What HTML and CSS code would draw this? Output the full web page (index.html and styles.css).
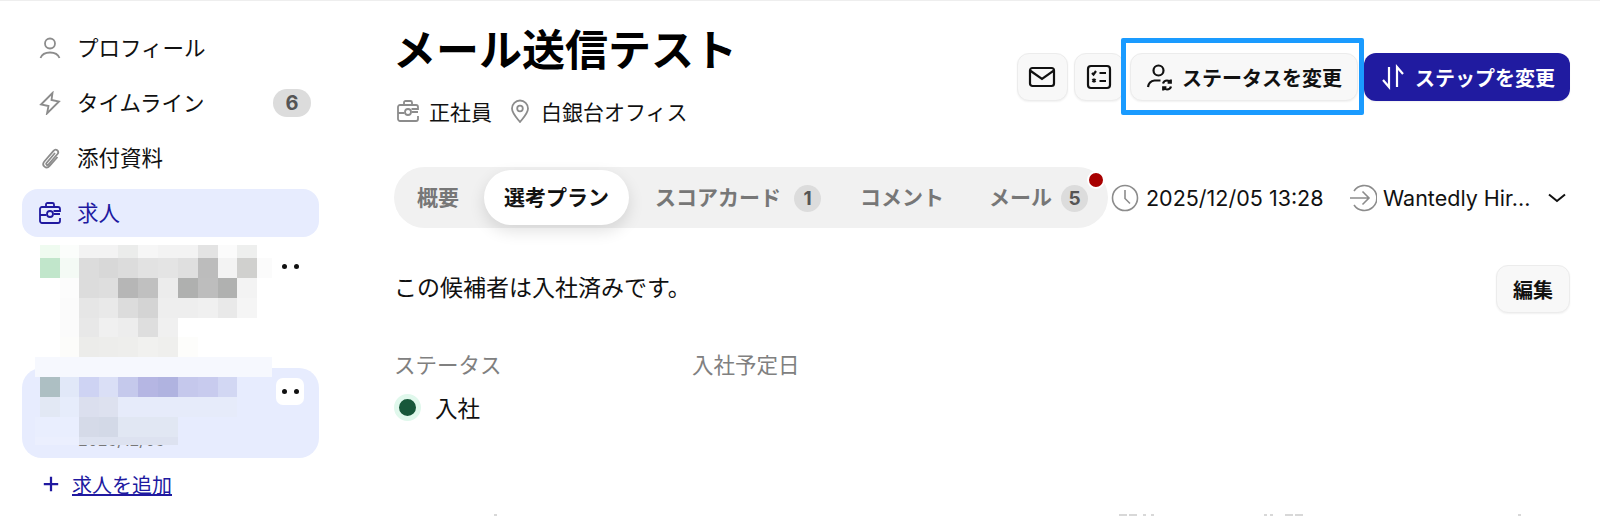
FILE: index.html
```html
<!DOCTYPE html>
<html lang="ja">
<head>
    <meta charset="UTF-8">
    <meta name="viewport" content="width=device-width, initial-scale=1.0">
    <title>メール送信テスト</title>
    <link rel="stylesheet" href="styles.css">
</head>
<body>
    <div class="page">
        <!-- Sidebar -->
        <aside class="sidebar">
            <a class="side-row">
                <svg class="icon" viewBox="0 0 24 24"><circle cx="12" cy="7.500" r="5"/><path d="M2.500 22c1.500-4 5-5.500 9.500-5.500s8 1.500 9.500 5.500"/></svg>
                <span class="side-label">プロフィール</span>
            </a>
            <a class="side-row">
                <svg class="icon" viewBox="0 0 24 24"><path d="M14.500 2 3 13.500l7.500 1.500-1.500 7.500L21 10.500 13.500 9z"/></svg>
                <span class="side-label">タイムライン</span>
                <span class="side-badge">6</span>
            </a>
            <a class="side-row">
                <svg class="icon" viewBox="0 0 24 24"><path d="m17 7-8.500 10c-1 1.300.8 2.800 1.900 1.500L19.500 8c2.200-2.800-1.600-6-4-3.200L6.300 15.500c-3.200 3.900 2 8.200 5.300 4.400L19.500 11"/></svg>
                <span class="side-label">添付資料</span>
            </a>
            <a class="side-row side-row-active">
                <svg class="icon" viewBox="0 0 24 24"><path d="M8 6V3.500C8 2.700 8.700 2 9.500 2h5c.8 0 1.500.7 1.500 1.500V6M2 14V8c0-1.100.9-2 2-2h16c1.100 0 2 .9 2 2v2h-6.500M2 14h6.500M22 17v3c0 1.100-.9 2-2 2H4c-1.100 0-2-.9-2-2v-6M15.500 13h6.500"/><circle cx="12" cy="13" r="3"/></svg>
                <span class="side-label">求人</span>
            </a>

            <div class="job-list">
                <div class="job-item">
                    <span class="dots"><i></i><i></i></span>
                </div>
                <div class="job-item job-item-active">
                    <span class="dots"><i></i><i></i></span>
                    <span class="job-date">2025/12/05</span>
                </div>
                <!-- Blurred-out job names -->
                <svg class="mosaic" viewBox="35 245 237 200" shape-rendering="crispEdges">
                    <g>
                        <rect x="40" y="245" width="20" height="13" fill="#effbf0"/><rect x="60" y="245" width="19" height="13" fill="#fbfdfb"/><rect x="79" y="245" width="39" height="13" fill="#f3f3f3"/><rect x="118" y="245" width="20" height="13" fill="#ebeceb"/><rect x="138" y="245" width="20" height="13" fill="#f6f6f6"/><rect x="158" y="245" width="40" height="13" fill="#f3f3f3"/><rect x="198" y="245" width="20" height="13" fill="#e3e3e3"/><rect x="218" y="245" width="19" height="13" fill="#fbfbfb"/><rect x="237" y="245" width="20" height="13" fill="#eeefee"/>
                        <rect x="40" y="258" width="20" height="20" fill="#c1e6cb"/><rect x="60" y="258" width="19" height="20" fill="#f4faf5"/><rect x="79" y="258" width="20" height="20" fill="#dcdcdc"/><rect x="99" y="258" width="19" height="20" fill="#d8d8d8"/><rect x="118" y="258" width="20" height="20" fill="#dcdcdc"/><rect x="138" y="258" width="20" height="20" fill="#e2e2e2"/><rect x="158" y="258" width="20" height="20" fill="#e4e4e4"/><rect x="178" y="258" width="20" height="20" fill="#dfdfdf"/><rect x="198" y="258" width="20" height="20" fill="#bcbcbc"/><rect x="218" y="258" width="19" height="20" fill="#f3f3f3"/><rect x="237" y="258" width="20" height="20" fill="#d0d0ce"/><rect x="257" y="258" width="15" height="20" fill="#fbfbfb"/>
                        <rect x="60" y="278" width="19" height="20" fill="#fcfcfc"/><rect x="79" y="278" width="20" height="20" fill="#dcdcdc"/><rect x="99" y="278" width="19" height="20" fill="#dedede"/><rect x="118" y="278" width="20" height="20" fill="#b6b6b6"/><rect x="138" y="278" width="20" height="20" fill="#c0c0c0"/><rect x="158" y="278" width="20" height="20" fill="#ececec"/><rect x="178" y="278" width="20" height="20" fill="#afb0af"/><rect x="198" y="278" width="20" height="20" fill="#bdbdbd"/><rect x="218" y="278" width="19" height="20" fill="#b0b1b0"/><rect x="237" y="278" width="20" height="20" fill="#f3f3f3"/>
                        <rect x="60" y="298" width="19" height="20" fill="#fbfbfb"/><rect x="79" y="298" width="20" height="20" fill="#e6e6e6"/><rect x="99" y="298" width="19" height="20" fill="#e9e9e9"/><rect x="118" y="298" width="20" height="20" fill="#dcdcdc"/><rect x="138" y="298" width="20" height="20" fill="#d4d4d4"/><rect x="158" y="298" width="40" height="20" fill="#eeeeee"/><rect x="198" y="298" width="20" height="20" fill="#f0f0f0"/><rect x="218" y="298" width="19" height="20" fill="#e9e9e9"/><rect x="237" y="298" width="20" height="20" fill="#f5f5f5"/>
                        <rect x="60" y="318" width="19" height="19" fill="#fbfbfb"/><rect x="79" y="318" width="20" height="19" fill="#e8e8e8"/><rect x="99" y="318" width="19" height="19" fill="#f0f0f0"/><rect x="118" y="318" width="20" height="19" fill="#ededed"/><rect x="138" y="318" width="20" height="19" fill="#dedede"/><rect x="158" y="318" width="20" height="19" fill="#f0f0f0"/>
                        <rect x="60" y="337" width="19" height="20" fill="#fcfcfa"/><rect x="79" y="337" width="20" height="20" fill="#ececea"/><rect x="99" y="337" width="19" height="20" fill="#ededeb"/><rect x="118" y="337" width="20" height="20" fill="#eeeeec"/><rect x="138" y="337" width="20" height="20" fill="#f1f1ef"/><rect x="158" y="337" width="20" height="20" fill="#efefed"/><rect x="178" y="337" width="20" height="20" fill="#fdfdfb"/>
                        <rect x="35" y="357" width="237" height="20" fill="#f6f8fe"/>
                        <rect x="40" y="377" width="20" height="20" fill="#adbfc3"/><rect x="60" y="377" width="19" height="20" fill="#e1e8f8"/><rect x="79" y="377" width="20" height="20" fill="#ced3f3"/><rect x="99" y="377" width="19" height="20" fill="#dadff6"/><rect x="118" y="377" width="20" height="20" fill="#c5c9ec"/><rect x="138" y="377" width="20" height="20" fill="#b5b6e3"/><rect x="158" y="377" width="20" height="20" fill="#b0b3e0"/><rect x="178" y="377" width="20" height="20" fill="#c5c8ec"/><rect x="198" y="377" width="20" height="20" fill="#c8cbee"/><rect x="218" y="377" width="19" height="20" fill="#d2d7f3"/>
                        <rect x="40" y="397" width="20" height="20" fill="#e2e8f4"/><rect x="60" y="397" width="19" height="20" fill="#e6ecfb"/><rect x="79" y="397" width="20" height="20" fill="#dbdfee"/><rect x="99" y="397" width="19" height="20" fill="#dde1ef"/><rect x="118" y="397" width="119" height="20" fill="#e6ebfa"/>
                        <rect x="35" y="417" width="44" height="20" fill="#e9eefe"/><rect x="79" y="417" width="20" height="20" fill="#d5dae8"/><rect x="99" y="417" width="19" height="20" fill="#d3d9e7"/><rect x="118" y="417" width="60" height="20" fill="#e1e7f3"/>
                        <rect x="35" y="437" width="44" height="8" fill="#ebeffe"/><rect x="79" y="437" width="99" height="8" fill="#dde2f0"/>
                    </g>
                </svg>
            </div>

            <a class="add-job">
                <svg class="icon-add" viewBox="0 0 20 20"><path d="M10 2v16M2 10h16"/></svg>
                <span>求人を追加</span>
            </a>
        </aside>

        <!-- Main -->
        <main class="main">
            <div class="header">
                <div>
                    <h1>メール送信テスト</h1>
                    <div class="meta">
                        <svg class="icon" viewBox="0 0 24 24"><path d="M8 6V3.500C8 2.700 8.700 2 9.500 2h5c.8 0 1.500.7 1.500 1.500V6M2 14V8c0-1.100.9-2 2-2h16c1.100 0 2 .9 2 2v2h-6.500M2 14h6.500M22 17v3c0 1.100-.9 2-2 2H4c-1.100 0-2-.9-2-2v-6M15.500 13h6.500"/><circle cx="12" cy="13" r="3"/></svg>
                        <span class="meta-text">正社員</span>
                        <svg class="icon icon-pin" viewBox="0 0 24 24"><path d="M12 23C8 18 4 14 4 9.500a8 8 0 0 1 16 0C20 14 16 18 12 23z"/><circle cx="12" cy="9.500" r="2.800"/></svg>
                        <span class="meta-text">白銀台オフィス</span>
                    </div>
                </div>
                <div class="actions">
                    <button class="btn btn-square">
                        <svg class="icon-dark" viewBox="0 0 28 28"><path d="M26 8v12.500c0 1.500-1 2.500-2.500 2.500h-19C3 23 2 22 2 20.500v-13C2 6 3 5 4.500 5h19c1.500 0 2.500 1 2.500 2.500L14 16 2 7.500"/></svg>
                    </button>
                    <button class="btn btn-square">
                        <svg class="icon-dark" viewBox="0 0 28 28"><rect x="3" y="3" width="22" height="22" rx="3"/><path d="m7 10 1.500 1.500L11 8M14.500 10H21M7.500 16l3 3M10.500 16l-3 3M14.500 18H21"/></svg>
                    </button>
                    <button class="btn btn-status">
                        <svg class="icon-dark" viewBox="0 0 28 28"><circle cx="12.500" cy="7.500" r="5"/><path d="M2 24c.5-3.500 2.500-6 6.500-6.500h6M17 20.500c.6-2 2.200-3 4-3s3 .8 3.800 2M24.800 16.500v3.200h-3.200M25 23.500c-.6 2-2.200 3-4 3s-3-.8-3.800-2M17.200 27.500v-3.200h3.200"/></svg>
                        <span>ステータスを変更</span>
                    </button>
                    <button class="btn btn-primary">
                        <svg class="icon-white" viewBox="0 0 28 28"><path d="M10 4v20L4 17M18 24V4l6 7"/></svg>
                        <span>ステップを変更</span>
                    </button>
                    <div class="highlight"></div>
                </div>
            </div>

            <div class="tab-row">
                <div class="tabs">
                    <a class="tab">概要</a>
                    <a class="tab tab-active">選考プラン</a>
                    <a class="tab">スコアカード<span class="tab-badge">1</span></a>
                    <a class="tab tab-comment">コメント</a>
                    <a class="tab tab-mail">メール<span class="tab-badge">5</span></a>
                    <span class="notify-dot"></span>
                </div>
                <div class="info">
                    <svg class="icon icon-info" viewBox="0 0 28 28"><circle cx="14" cy="14" r="12.500"/><path d="M14 6v8.500l5 5"/></svg>
                    <span class="info-date">2025/12/05 13:28</span>
                    <svg class="icon icon-info" viewBox="0 0 28 28"><path d="M5 7a12.500 12.500 0 1 1 0 14M1 14h19M13.500 7.500 20 14l-6.500 6.500"/></svg>
                    <span class="info-name">Wantedly Hir...</span>
                    <svg class="icon-chevron" viewBox="0 0 18 10"><path d="m1 1.500 8 6.500 8-6.500"/></svg>
                </div>
            </div>

            <div class="notice-row">
                <p class="notice">この候補者は入社済みです。</p>
                <button class="btn btn-edit">編集</button>
            </div>

            <div class="fields">
                <div class="field">
                    <div class="field-label">ステータス</div>
                    <div class="field-value"><span class="status-dot"></span>入社</div>
                </div>
                <div class="field">
                    <div class="field-label">入社予定日</div>
                </div>
            </div>
        </main>
    </div>
    <!-- Tops of the next line of text, cut off by the window -->
    <svg class="cut-text" viewBox="0 0 1600 2" shape-rendering="crispEdges">
        <path d="M494 0h3v2h-3zM1119 0h8v2h-8zM1129 0h8v2h-8zM1143 0h3v2h-3zM1151 0h3v2h-3zM1264 0h3v2h-3zM1270 0h3v2h-3zM1285 0h8v2h-8zM1295 0h8v2h-8zM1518 0h3v2h-3z"/>
    </svg>
</body>
</html>
```

FILE: styles.css
```css
/* General Styles */
* {
    margin: 0;
    padding: 0;
    box-sizing: border-box;
}

html, body {
    height: 100%;
    overflow: hidden;
}

body {
    font-family: Inter, "Noto Sans CJK JP", sans-serif;
    background-color: #fff;
    color: #111;
    border-top: 1px solid #eee;
}

.page {
    display: flex;
    height: 513px;
}

.cut-text {
    display: block;
    width: 1600px;
    height: 2px;
    fill: #d8d8d8;
}

/* Sidebar */
.sidebar {
    width: 297px;
    margin-left: 22px;
    padding-top: 23px;
    flex-shrink: 0;
    display: flex;
    flex-direction: column;
}

.side-row {
    display: flex;
    align-items: center;
    gap: 15px;
    height: 48px;
    margin-bottom: 7px;
    padding: 0 8px 0 16px;
    border-radius: 16px;
    font-size: 21.500px;
}

.side-label {
    margin-top: -4px;
}

.side-row-active {
    background-color: #e7ecfe;
    color: #2019a0;
    margin-bottom: 8px;
}

.side-row-active .icon {
    stroke: #2019a0;
}

.icon {
    width: 24px;
    height: 24px;
    fill: none;
    stroke: #8c8c8c;
    stroke-width: 1.800;
    flex-shrink: 0;
}

.side-badge {
    margin-left: auto;
    width: 38px;
    height: 28px;
    line-height: 28px;
    border-radius: 14px;
    background-color: #dcdcdc;
    color: #555;
    font-size: 20px;
    font-weight: 700;
    text-align: center;
}

/* Job list */
.job-list {
    position: relative;
}

.job-item {
    height: 123px;
    position: relative;
    display: flex;
    justify-content: flex-end;
    padding: 8px 15px 0 0;
    border-radius: 20px;
}

.job-item-active {
    height: 90px;
    background-color: #e7ecfe;
    padding-top: 10px;
}

.dots {
    width: 28px;
    height: 27px;
    border-radius: 7px;
    display: flex;
    justify-content: center;
    align-items: center;
    gap: 7px;
}

.dots i {
    width: 5px;
    height: 5px;
    border-radius: 50%;
    background-color: #111;
}

.job-item-active .dots {
    background-color: #fff;
}

.job-date {
    position: absolute;
    left: 56px;
    top: 62px;
    font-size: 16px;
    color: #777;
}

.mosaic {
    position: absolute;
    left: 13px;
    top: 0;
    width: 237px;
    height: 200px;
}

.add-job {
    display: flex;
    align-items: center;
    gap: 12px;
    height: 32px;
    margin-top: 10px;
    padding-left: 20px;
    color: #2019a0;
    font-size: 20px;
    text-decoration: underline;
}

.icon-add {
    width: 18px;
    height: 18px;
    fill: none;
    stroke: #2019a0;
    stroke-width: 2.500;
}

/* Main */
.main {
    width: 1174px;
    margin-left: 77px;
    padding-top: 21px;
}

.header {
    display: flex;
    justify-content: space-between;
}

h1 {
    margin-left: -3px;
    font-size: 43px;
    font-weight: 700;
    line-height: 56px;
    color: #000;
}

.meta {
    display: flex;
    align-items: center;
    height: 36px;
    margin-top: 15px;
    font-size: 21px;
}

.meta-text {
    margin-left: 9px;
}

.icon-pin {
    margin-left: 16px;
}

/* Buttons */
.actions {
    position: relative;
    display: flex;
    gap: 6px;
    margin-top: 31px;
    height: 48px;
}

.btn {
    display: flex;
    align-items: center;
    justify-content: center;
    gap: 8px;
    height: 48px;
    border: 1px solid #ececec;
    border-radius: 12px;
    background-color: #f8f8f8;
    box-shadow: 0 1px 2px rgba(0, 0, 0, 0.06);
    font-family: inherit;
    font-size: 20px;
    font-weight: 600;
    color: #111;
}

.btn-square {
    width: 50.500px;
}

.btn-status {
    width: 228px;
}

.btn-primary {
    width: 206px;
    border: none;
    background-color: #201ba0;
    color: #fff;
}

.icon-dark, .icon-white {
    width: 28px;
    height: 28px;
    fill: none;
    stroke: #111;
    stroke-width: 2.200;
    flex-shrink: 0;
}

.icon-white {
    stroke: #fff;
}

.highlight {
    position: absolute;
    left: 103.500px;
    top: -15px;
    width: 243px;
    height: 77px;
    border: 5px solid #1a9bff;
    border-radius: 2px;
}

/* Tabs */
.tab-row {
    display: flex;
    align-items: center;
    margin-top: 38px;
}

.tabs {
    position: relative;
    display: flex;
    align-items: center;
    width: 714px;
    height: 61px;
    margin-left: -2px;
    padding-left: 23px;
    border-radius: 31px;
    background-color: #f1f1f1;
}

.tab {
    display: flex;
    align-items: center;
    gap: 13px;
    margin-left: 26px;
    padding-bottom: 4px;
    font-size: 21px;
    font-weight: 600;
    color: #777;
    white-space: nowrap;
}

.tab:first-child {
    margin-left: 0;
}

.tab-active {
    height: 55px;
    margin-left: 25px;
    padding: 0 20px 4px;
    border-radius: 28px;
    background-color: #fff;
    color: #111;
    box-shadow: 0 6px 16px rgba(0, 0, 0, 0.12);
}

.tab-comment {
    margin-left: 39px;
}

.tab-mail {
    margin-left: 45px;
    gap: 9px;
}

.tab-badge {
    width: 27px;
    height: 27px;
    margin-bottom: -6px;
    line-height: 27px;
    border-radius: 50%;
    background-color: #dcdcdc;
    color: #555;
    font-size: 19px;
    font-weight: 700;
    text-align: center;
}

.notify-dot {
    position: absolute;
    left: 693px;
    top: 4px;
    width: 18px;
    height: 18px;
    border: 2px solid #fff;
    border-radius: 50%;
    background-color: #a80000;
}

.info {
    display: flex;
    align-items: center;
    flex: 1;
    font-size: 21.500px;
}

.icon-info {
    width: 28px;
    height: 28px;
    stroke-width: 1.600;
}

.info > .icon-info:first-child {
    margin-left: 3px;
}

.info-date {
    width: 180px;
    margin-left: 7px;
    margin-right: 23px;
    white-space: nowrap;
}

.info-name {
    width: 165px;
    margin-left: 6px;
    white-space: nowrap;
}

.icon-chevron {
    width: 18px;
    height: 10px;
    fill: none;
    stroke: #111;
    stroke-width: 2;
}

/* Content */
.notice-row {
    display: flex;
    justify-content: space-between;
    align-items: center;
    margin-top: 37px;
}

.notice {
    margin-bottom: 6px;
    margin-left: -2px;
    font-size: 23px;
}

.btn-edit {
    width: 74px;
}

.fields {
    display: flex;
    margin-top: 37px;
    margin-left: -2px;
}

.field {
    width: 298px;
}

.field-label {
    height: 30px;
    line-height: 30px;
    font-size: 21.500px;
    color: #808080;
}

.field-value {
    display: flex;
    align-items: center;
    gap: 14px;
    height: 30px;
    margin-top: 12px;
    font-size: 22.500px;
}

.status-dot {
    width: 27px;
    height: 27px;
    border: 5px solid #e0f8ec;
    border-radius: 50%;
    background-color: #17573a;
}
```
